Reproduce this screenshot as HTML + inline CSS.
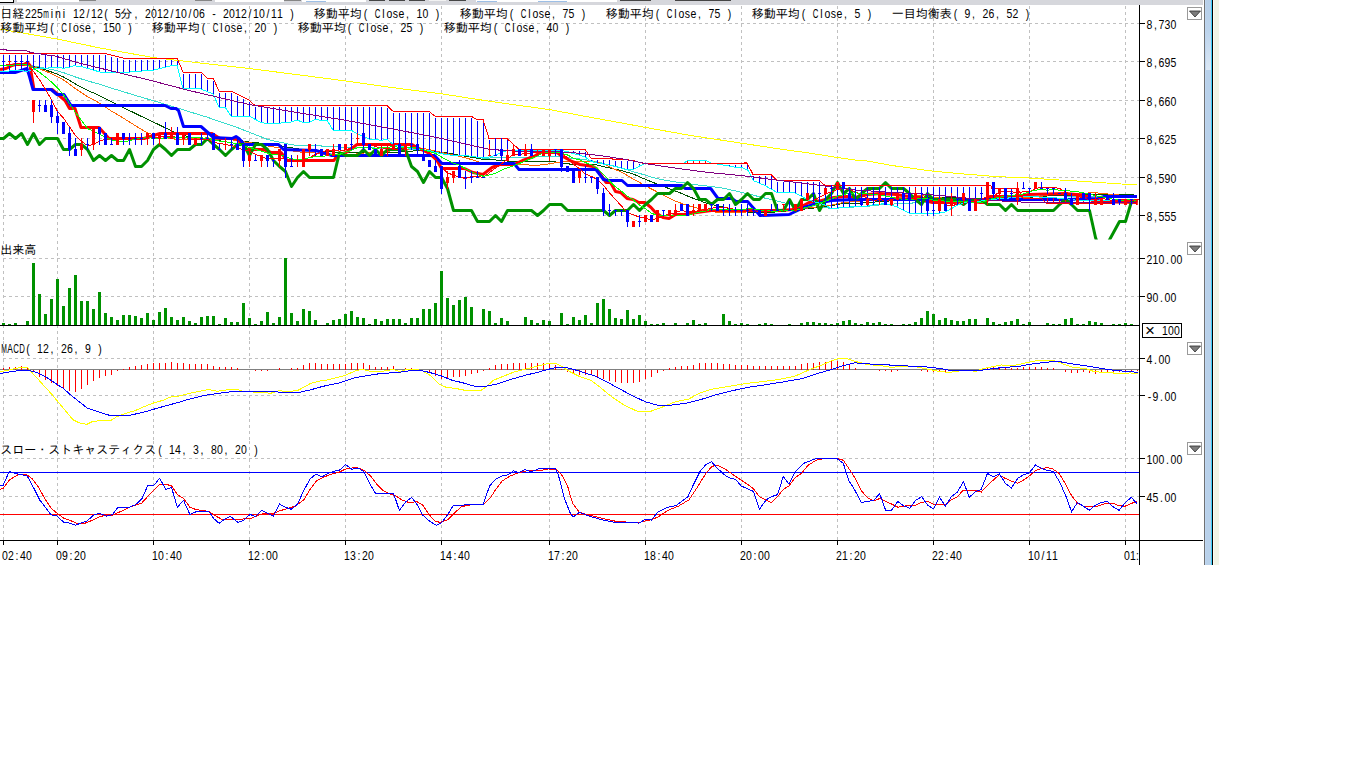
<!DOCTYPE html><html lang="ja"><head><meta charset="utf-8"><title>日経225mini chart</title><style>html,body{margin:0;padding:0;background:#fff;overflow:hidden}svg{display:block}</style></head><body><svg width="1366" height="768" viewBox="0 0 1366 768" font-family="Liberation Mono, IPAGothic, monospace" shape-rendering="crispEdges">
<rect width="1366" height="768" fill="#fff"/>
<rect x="0" y="0" width="1203" height="5" fill="#d6d7dc"/>
<rect x="0" y="0" width="13" height="2" fill="#fff"/>
<rect x="0" y="2" width="14" height="1" fill="#000"/>
<rect x="13" y="0" width="1" height="3" fill="#000"/>
<rect x="17" y="0" width="62" height="2" fill="#fff"/>
<rect x="79" y="0" width="17" height="1" fill="#858585"/>
<rect x="195" y="0" width="17" height="1" fill="#858585"/>
<rect x="215" y="0" width="69" height="2" fill="#fff"/>
<rect x="284" y="0" width="17" height="1" fill="#858585"/>
<rect x="302" y="0" width="64" height="2" fill="#fff"/>
<rect x="306" y="1" width="20" height="1" fill="#9dbfe6"/>
<rect x="369" y="0" width="16" height="1" fill="#454545"/>
<rect x="389" y="0" width="16" height="1" fill="#454545"/>
<rect x="409" y="0" width="16" height="1" fill="#454545"/>
<rect x="429" y="0" width="17" height="1" fill="#f2f2f2"/>
<rect x="449" y="0" width="17" height="1" fill="#454545"/>
<rect x="476" y="0" width="141" height="2" fill="#fff"/>
<rect x="477" y="1" width="20" height="1" fill="#9dbfe6"/>
<rect x="538" y="1" width="29" height="1" fill="#9dbfe6"/>
<rect x="620" y="0" width="31" height="1" fill="#454545"/>
<rect x="675" y="0" width="56" height="1" fill="#454545"/>
<defs><linearGradient id="fr" x1="0" y1="0" x2="0" y2="1"><stop offset="0" stop-color="#b7cfe9"/><stop offset="0.45" stop-color="#bdd4ec"/><stop offset="1" stop-color="#dbe7f4"/></linearGradient></defs>
<rect x="1204" y="0" width="1" height="565" fill="#707172"/>
<rect x="1205" y="0" width="6" height="565" fill="#b9d1ea"/>
<rect x="1205" y="0" width="6" height="70" fill="url(#fr)"/>
<rect x="1205" y="0" width="1" height="565" fill="#bfd7f1"/>
<rect x="1211" y="0" width="1" height="565" fill="#3fcffb"/>
<rect x="1212" y="0" width="1" height="565" fill="#000"/>
<rect x="1213" y="0" width="6" height="565" fill="#f0f4e6"/>
<rect x="1213" y="0" width="1" height="565" fill="#fbfdf2"/>
<path d="M3.5 6V240 M3.5 241V340 M3.5 341V440 M3.5 441V540 M57.5 6V240 M57.5 241V340 M57.5 341V440 M57.5 441V540 M153.5 6V240 M153.5 241V340 M153.5 341V440 M153.5 441V540 M249.5 6V240 M249.5 241V340 M249.5 341V440 M249.5 441V540 M345.5 6V240 M345.5 241V340 M345.5 341V440 M345.5 441V540 M441.5 6V240 M441.5 241V340 M441.5 341V440 M441.5 441V540 M549.5 6V240 M549.5 241V340 M549.5 341V440 M549.5 441V540 M645.5 6V240 M645.5 241V340 M645.5 341V440 M645.5 441V540 M741.5 6V240 M741.5 241V340 M741.5 341V440 M741.5 441V540 M837.5 6V240 M837.5 241V340 M837.5 341V440 M837.5 441V540 M933.5 6V240 M933.5 241V340 M933.5 341V440 M933.5 441V540 M1029.5 6V240 M1029.5 241V340 M1029.5 341V440 M1029.5 441V540 M1125.5 6V240 M1125.5 241V340 M1125.5 341V440 M1125.5 441V540 M3 23.5H1139 M3 61.5H1139 M3 100.5H1139 M3 138.5H1139 M3 177.5H1139 M3 215.5H1139 M3 258.5H1139 M3 296.5H1139 M3 358.5H1139 M3 395.5H1139 M3 458.5H1139 M3 496.5H1139" stroke="#c0c0c0" stroke-width="1" stroke-dasharray="3 3" fill="none"/>
<g clip-path="url(#cp)"><clipPath id="cp"><rect x="0" y="5" width="1137.5" height="234.5"/></clipPath>
<polyline points="0,65.27 3.5,65.27 9.5,65.24 15.5,65.22 21.5,65.19 27.5,65.16 33.5,66.04 39.5,67.06 45.5,68.21 51.5,69.51 57.5,70.94 63.5,72.64 69.5,74.76 75.5,77.01 81.5,78.99 87.5,80.97 93.5,82.54 99.5,84.25 105.5,86.23 111.5,88.21 117.5,89.91 123.5,91.76 129.5,93.6 135.5,95.44 141.5,97.28 147.5,98.99 153.5,100.83 159.5,102.53 165.5,104.38 171.5,106.08 177.5,108.06 183.5,109.77 189.5,111.75 195.5,113.59 201.5,115.43 207.5,117.28 213.5,119.39 219.5,121.51 225.5,123.49 231.5,125.47 237.5,127.59 243.5,130.01 249.5,132.29 255.5,134.71 261.5,136.99 267.5,139.41 273.5,140.93 279.5,142.03 285.5,143.4 291.5,144.64 297.5,145.6 303.5,146.01 309.5,145.88 315.5,145.74 321.5,146.01 327.5,146.15 333.5,146.7 339.5,147.11 345.5,147.11 351.5,147.11 357.5,147.25 363.5,147.39 369.5,147.66 375.5,148.07 381.5,148.35 387.5,148.62 393.5,148.76 399.5,149.31 405.5,149.45 411.5,149.72 417.5,149.86 423.5,150.55 429.5,151.1 435.5,151.93 441.5,153.13 447.5,154.1 453.5,154.65 459.5,155.34 465.5,156.16 471.5,156.99 477.5,157.67 483.5,158.09 489.5,158.02 495.5,157.88 501.5,157.88 507.5,157.74 513.5,157.47 519.5,157.6 525.5,157.19 531.5,156.92 537.5,156.64 543.5,156.64 549.5,156.78 555.5,156.78 561.5,157.05 567.5,157.6 573.5,158.43 579.5,158.98 585.5,159.8 591.5,160.63 597.5,161.87 603.5,163.52 609.5,165.03 615.5,166.4 621.5,167.92 627.5,169.84 633.5,171.77 639.5,173.42 645.5,175.2 651.5,177.13 657.5,178.64 663.5,179.88 669.5,180.98 675.5,181.94 681.5,182.52 687.5,183.48 693.5,184.44 699.5,185.13 705.5,185.82 711.5,186.51 717.5,187.33 723.5,188.16 729.5,189.6 735.5,190.97 741.5,192.35 747.5,193.72 753.5,195.24 759.5,196.75 765.5,198.26 771.5,199.64 777.5,201.15 783.5,202.53 789.5,204.04 795.5,205.41 801.5,206.24 807.5,206.79 813.5,207.06 819.5,207.61 825.5,207.89 831.5,208.16 837.5,208.03 843.5,207.47 849.5,207.2 855.5,206.93 861.5,206.79 867.5,206.24 873.5,205.69 879.5,205 885.5,204.72 891.5,204.18 897.5,203.76 903.5,203.49 909.5,203.21 915.5,202.8 921.5,202.39 927.5,202.25 933.5,202.25 939.5,202.11 945.5,202.25 951.5,202.11 957.5,201.84 963.5,201.43 969.5,201.43 975.5,201.15 981.5,200.74 987.5,200.05 993.5,199.64 999.5,198.95 1005.5,198.68 1011.5,198.26 1017.5,197.71 1023.5,197.3 1029.5,196.75 1035.5,196.2 1041.5,195.93 1047.5,195.79 1053.5,195.65 1059.5,195.65 1065.5,195.93 1071.5,196.34 1077.5,196.61 1083.5,196.89 1089.5,196.89 1095.5,196.89 1101.5,196.75 1107.5,196.75 1113.5,196.89 1119.5,197.03 1125.5,196.89 1131.5,196.89 1137.5,197.16" fill="none" stroke="#38dccc" stroke-width="1" shape-rendering="crispEdges"/>
<polyline points="0,65.26 3.5,65.26 9.5,65.21 15.5,65.17 21.5,65.12 27.5,65.08 33.5,66.49 39.5,68.12 45.5,69.96 51.5,72.03 57.5,74.32 63.5,77.05 69.5,80.44 75.5,84.04 81.5,87.21 87.5,90.38 93.5,92.89 99.5,95.62 105.5,98.78 111.5,101.95 117.5,104.68 123.5,107.63 129.5,110.58 135.5,113.52 141.5,116.47 147.5,119.2 153.5,122.19 159.5,124.96 165.5,127.96 171.5,130.73 177.5,133.94 183.5,135.26 189.5,136.8 195.5,137.9 201.5,138.78 207.5,139.44 213.5,140.1 219.5,140.1 225.5,139.66 231.5,139.66 237.5,139.88 243.5,141.2 249.5,142.08 255.5,142.74 261.5,143.18 267.5,144.28 273.5,145.16 279.5,145.6 285.5,146.7 291.5,147.8 297.5,148.9 303.5,149.34 309.5,149.78 315.5,150.22 321.5,151.1 327.5,151.32 333.5,151.98 339.5,152.2 345.5,152.42 351.5,152.64 357.5,152.64 363.5,152.42 369.5,152.42 375.5,152.86 381.5,153.08 387.5,152.86 393.5,152.2 399.5,152.2 405.5,151.54 411.5,151.1 417.5,150.66 423.5,150.66 429.5,151.32 435.5,151.54 441.5,152.38 447.5,153.04 453.5,153.92 459.5,155.24 465.5,156.34 471.5,157.22 477.5,158.32 483.5,159.42 489.5,159.53 495.5,159.97 501.5,160.41 507.5,161.07 513.5,161.29 519.5,161.51 525.5,161.29 531.5,161.51 537.5,161.73 543.5,161.95 549.5,161.73 555.5,161.95 561.5,162.83 567.5,163.71 573.5,164.59 579.5,164.81 585.5,165.03 591.5,164.63 597.5,165.07 603.5,166.61 609.5,167.93 615.5,169.25 621.5,170.57 627.5,172.33 633.5,174.09 639.5,176.84 645.5,179.26 651.5,181.9 657.5,184.1 663.5,186.52 669.5,188.72 675.5,191.14 681.5,193.34 687.5,195.98 693.5,198.4 699.5,200.6 705.5,202.8 711.5,204.34 717.5,205.88 723.5,206.98 729.5,208.52 735.5,209.84 741.5,211.16 747.5,212.04 753.5,212.04 759.5,212.26 765.5,212.26 771.5,212.26 777.5,211.82 783.5,211.16 789.5,210.72 795.5,210.28 801.5,209.4 807.5,208.74 813.5,208.08 819.5,207.42 825.5,206.54 831.5,205.66 837.5,204.34 843.5,203.46 849.5,203.24 855.5,203.02 861.5,203.02 867.5,202.58 873.5,202.14 879.5,201.48 885.5,201.26 891.5,200.82 897.5,200.16 903.5,199.72 909.5,199.06 915.5,198.4 921.5,197.74 927.5,197.74 933.5,197.96 939.5,197.52 945.5,197.74 951.5,197.74 957.5,197.96 963.5,197.96 969.5,198.62 975.5,199.06 981.5,199.28 987.5,199.28 993.5,199.5 999.5,199.06 1005.5,199.06 1011.5,198.62 1017.5,198.18 1023.5,197.74 1029.5,197.52 1035.5,196.64 1041.5,196.2 1047.5,195.98 1053.5,195.54 1059.5,195.32 1065.5,195.54 1071.5,195.98 1077.5,195.32 1083.5,194.88 1089.5,194.88 1095.5,194.44 1101.5,194.44 1107.5,194.44 1113.5,194.88 1119.5,194.44 1125.5,194.44 1131.5,194.66 1137.5,195.54" fill="none" stroke="#005000" stroke-width="1" shape-rendering="crispEdges"/>
<polyline points="0,65.24 3.5,65.24 9.5,65.19 15.5,65.13 21.5,65.08 27.5,65.02 33.5,66.78 39.5,68.82 45.5,71.13 51.5,73.72 57.5,76.57 63.5,79.98 69.5,84.22 75.5,88.73 81.5,92.69 87.5,96.65 93.5,99.78 99.5,103.19 105.5,107.16 111.5,111.12 117.5,114.53 123.5,118.27 129.5,122.01 135.5,125.75 141.5,129.49 147.5,132.95 153.5,134.88 159.5,136.25 165.5,137.62 171.5,138.45 177.5,139.55 183.5,139.55 189.5,139.28 195.5,138.45 201.5,138.18 207.5,137.9 213.5,139 219.5,139.82 225.5,139.82 231.5,139.82 237.5,140.65 243.5,141.75 249.5,142.57 255.5,143.68 261.5,144.5 267.5,145.88 273.5,146.97 279.5,147.8 285.5,149.18 291.5,150.82 297.5,151.65 303.5,152.47 309.5,152.47 315.5,153.03 321.5,153.85 327.5,154.4 333.5,154.4 339.5,154.4 345.5,154.4 351.5,154.4 357.5,153.85 363.5,153.03 369.5,152.75 375.5,152.47 381.5,152.2 387.5,151.38 393.5,150.55 399.5,150.82 405.5,149.72 411.5,148.62 417.5,148.07 423.5,148.62 429.5,149.72 435.5,150.82 441.5,152.42 447.5,153.8 453.5,154.9 459.5,156.27 465.5,157.92 471.5,159.57 477.5,161.5 483.5,163.15 489.5,163.28 495.5,163.28 501.5,163.56 507.5,164.11 513.5,164.38 519.5,164.38 525.5,164.66 531.5,165.21 537.5,165.21 543.5,164.66 549.5,163.83 555.5,162.73 561.5,161.69 567.5,161.41 573.5,161.96 579.5,161.69 585.5,161.69 591.5,161.69 597.5,162.24 603.5,163.89 609.5,166.78 615.5,169.53 621.5,172.28 627.5,175.57 633.5,179.15 639.5,182.45 645.5,185.75 651.5,189.05 657.5,192.07 663.5,195.1 669.5,198.12 675.5,201.15 681.5,203.35 687.5,205.55 693.5,206.93 699.5,208.57 705.5,209.95 711.5,211.32 717.5,212.43 723.5,212.43 729.5,212.43 735.5,212.43 741.5,212.43 747.5,211.88 753.5,211.32 759.5,211.05 765.5,210.78 771.5,210.22 777.5,210.22 783.5,209.95 789.5,209.95 795.5,209.68 801.5,209.12 807.5,208.03 813.5,207.2 819.5,206.65 825.5,205.82 831.5,205 837.5,203.62 843.5,202.53 849.5,201.97 855.5,201.43 861.5,201.15 867.5,200.6 873.5,200.05 879.5,198.95 885.5,198.68 891.5,198.12 897.5,197.3 903.5,197.03 909.5,196.47 915.5,195.93 921.5,195.65 927.5,196.47 933.5,197.3 939.5,197.57 945.5,198.68 951.5,199.22 957.5,200.05 963.5,200.32 969.5,200.88 975.5,200.88 981.5,200.32 987.5,199.5 993.5,199.22 999.5,198.95 1005.5,198.68 1011.5,198.4 1017.5,198.12 1023.5,197.57 1029.5,197.03 1035.5,196.47 1041.5,196.2 1047.5,195.1 1053.5,194 1059.5,193.72 1065.5,193.18 1071.5,193.45 1077.5,193.18 1083.5,193.45 1089.5,192.9 1095.5,192.9 1101.5,193.18 1107.5,194 1113.5,194.55 1119.5,195.1 1125.5,195.1 1131.5,195.38 1137.5,196.2" fill="none" stroke="#ff6400" stroke-width="1" shape-rendering="crispEdges"/>
<polyline points="0,29 57,39 100,48 153,57.5 200,63 249,68.5 300,75 342,80.5 383,86.3 409,89.8 441,93.7 478,99.5 514.5,104.8 549,109.5 594,118 620,122.7 646,127.5 690,135.4 786.5,150 809,153 837.5,157.5 855,160 865,160.6 892.5,165.6 933.5,171.25 961,173.75 992.5,176.25 1011,177.25 1029,178 1055,179.75 1077,181 1099,182.5 1121,184 1137,184.4" fill="none" stroke="#ffff00" stroke-width="1" shape-rendering="crispEdges"/>
<polyline points="0,69.5 6,68.5 12,65.5 15,64.5 23.5,64.5 27.5,62.5 30,65.5 34,89.5 52,89.5 58,94.5 65,100.5 69.5,108.5 75,108.5 81,127.5 99,127.5 109,138.5 144,138.5 160,133.5 212,133.5 220,138.5 236,138.5 243,144.5 247,149.5 263.5,149.5 271,152.5 281,152.5 287,160.5 334,160.5 337,155.5 346,152.5 351.5,148.5 357,144.5 412,144.5 417,147.5 429.5,153.5 437,160.5 441,167.5 442,168.5 464.5,168.5 473,172.5 483,174.5 492,167.5 499.5,164.5 514,164.5 522.5,160.5 534,156.5 540,152.5 543.5,152.5 557,152.5 561,155.5 566.5,158.5 572,161.5 580,164.5 593,166.5 596.5,168.5 601.5,175.5 606,182.5 610.5,182.5 615.5,191.5 620.5,192.5 627,198.5 633,199.5 639,202.5 645,202.5 651,207.5 655.5,212.5 663,217.5 669,218.5 675.5,214.5 684,214.5 696.5,212.5 711.5,210.5 744,210.5 779,210.5 794,209.5 801.5,206.5 809,202.5 821.5,200.5 834,197.5 846.5,196.5 855,197.5 867.5,194.5 880,193.5 896,194.5 915,197.5 925,200.5 932.5,202.5 955,202.5 967.5,200.5 980,202.5 986,202.5 990,196.5 1017,196.5 1029,194.5 1065,193.5 1076,194.5 1088,196.5 1093,201.5 1137,202.5" fill="none" stroke="#ff0000" stroke-width="3" shape-rendering="geometricPrecision" stroke-linejoin="round"/>
<polyline points="0,72.5 15,72.5 21,70.5 27,68.5 29.5,76.5 33,89.5 51,89.5 57,94.5 64,94.5 71,105.5 165,105.5 171,108.5 176,108.5 178.5,110.5 183.5,126.5 201,126.5 213.5,137.5 232,138.5 236,136.5 239,138.5 243.5,143.5 244,144.5 278.5,144.5 283.5,149.5 316,150.5 332,155.5 434.5,155.5 442,163.5 514,163.5 519,169.5 596,169.5 603.5,179.5 609,180.5 622,180.5 627.5,185.5 682,185.5 685,188.5 710.7,188.5 718,198.5 732,198.5 736,201.5 747.6,201.5 760,215.5 789,214.5 804,207.5 816.5,203.5 831.5,200.5 855,199.5 1026,199.5 1066,199.5 1098,198.5 1104,196.5 1137,196.5" fill="none" stroke="#0000ff" stroke-width="3" shape-rendering="geometricPrecision" stroke-linejoin="round"/>
<polyline points="0,138.5 3.5,138.5 9.5,133.5 15.5,138.5 21.5,133.5 27.5,144.5 33.5,133.5 39.5,144.5 45.5,138.5 51.5,138.5 57.5,138.5 63.5,149.5 69.5,149.5 75.5,144.5 81.5,144.5 87.5,149.5 93.5,160.5 99.5,155.5 105.5,160.5 111.5,155.5 117.5,160.5 123.5,160.5 129.5,149.5 135.5,166.5 141.5,166.5 147.5,160.5 153.5,149.5 159.5,144.5 165.5,149.5 171.5,155.5 177.5,149.5 183.5,149.5 189.5,149.5 195.5,144.5 201.5,144.5 207.5,138.5 213.5,144.5 219.5,149.5 225.5,155.5 231.5,149.5 237.5,144.5 243.5,144.5 249.5,155.5 255.5,144.5 261.5,144.5 267.5,149.5 273.5,160.5 279.5,166.5 285.5,171.5 291.5,186.5 297.5,177.5 303.5,171.5 309.5,177.5 315.5,177.5 321.5,177.5 327.5,177.5 333.5,177.5 339.5,152.5 345.5,155.5 351.5,155.5 357.5,155.5 363.5,149.5 369.5,155.5 375.5,149.5 381.5,155.5 387.5,149.5 393.5,149.5 399.5,149.5 405.5,149.5 411.5,166.5 417.5,171.5 423.5,182.5 429.5,171.5 435.5,177.5 441.5,177.5 447.5,188.5 453.5,210.5 459.5,210.5 465.5,210.5 471.5,210.5 477.5,221.5 483.5,221.5 489.5,221.5 495.5,215.5 501.5,221.5 507.5,210.5 513.5,210.5 519.5,210.5 525.5,210.5 531.5,210.5 537.5,215.5 543.5,210.5 549.5,204.5 555.5,204.5 561.5,204.5 567.5,210.5 573.5,210.5 579.5,210.5 585.5,210.5 591.5,210.5 597.5,210.5 603.5,210.5 609.5,215.5 615.5,210.5 621.5,210.5 627.5,210.5 633.5,204.5 639.5,210.5 645.5,204.5 651.5,199.5 657.5,193.5 663.5,193.5 669.5,193.5 675.5,188.5 681.5,188.5 687.5,182.5 693.5,188.5 699.5,199.5 705.5,199.5 711.5,204.5 717.5,199.5 723.5,199.5 729.5,193.5 735.5,204.5 741.5,199.5 747.5,193.5 753.5,199.5 759.5,199.5 765.5,193.5 771.5,193.5 777.5,210.5 783.5,210.5 789.5,199.5 795.5,210.5 801.5,199.5 807.5,199.5 813.5,193.5 819.5,210.5 825.5,199.5 831.5,193.5 837.5,182.5 843.5,193.5 849.5,188.5 855.5,199.5 861.5,193.5 867.5,188.5 873.5,188.5 879.5,188.5 885.5,182.5 891.5,188.5 897.5,188.5 903.5,188.5 909.5,193.5 915.5,199.5 921.5,204.5 927.5,193.5 933.5,199.5 939.5,199.5 945.5,199.5 951.5,199.5 957.5,199.5 963.5,204.5 969.5,199.5 975.5,199.5 981.5,199.5 987.5,204.5 993.5,204.5 999.5,204.5 1005.5,210.5 1011.5,204.5 1017.5,210.5 1023.5,210.5 1029.5,210.5 1035.5,210.5 1041.5,210.5 1047.5,210.5 1053.5,210.5 1059.5,204.5 1065.5,199.5 1071.5,204.5 1077.5,210.5 1083.5,210.5 1089.5,210.5 1095.5,237.5 1101.5,254.5 1107.5,243.5 1113.5,232.5 1119.5,221.5 1125.5,221.5 1131.5,201.5 1137.5,201.5" fill="none" stroke="#009100" stroke-width="3" shape-rendering="geometricPrecision" stroke-linejoin="round"/>
<path d="M3.5 55V71.6111 M9.5 55V70.9167 M15.5 55V70.0417 M21.5 55V70.5833 M27.5 55V71.3083 M33.5 55V69.05 M39.5 55V68.3 M45.5 55V68.3 M51.5 55V67.4 M57.5 55V67.4 M63.5 55V68.225 M69.5 55V67.2182 M75.5 55V65.74 M81.5 55V66.6447 M87.5 55V68.3816 M93.5 55V70.1184 M99.5 55V71.8553 M105.5 55.125V72 M111.5 56.625V72 M117.5 58.125V72 M123.5 59.5V72 M129.5 59.5V72 M135.5 59.5V71.5417 M141.5 59.5V71.0417 M147.5 59.5V70.5417 M153.5 59.5V70.0417 M159.5 59.5V68.625 M165.5 59.5V67.125 M171.5 59.5V65.7857 M177.5 60.6667V66.9792 M183.5 73.5V88.7569 M189.5 73.5V88.8403 M195.5 73.5V88.9236 M201.5 74V89.2083 M207.5 79.5V91.7083 M213.5 80.5833V95.0833 M219.5 92.5V107 M225.5 92.5V107.75 M231.5 92.75V116 M237.5 95.75V116 M243.5 98.75V116 M249.5 101.967V116.271 M255.5 107.1V119.521 M261.5 107.1V122.583 M267.5 107.1V123.5 M273.5 107.1V123.5 M279.5 107.1V123.375 M285.5 107.1V122 M291.5 107.1V121.833 M297.5 107.1V120.208 M303.5 107.1V122.5 M309.5 107.1V122.242 M315.5 107.1V119.483 M321.5 107.1V120.4 M327.5 107.1V121.2 M333.5 107.1V130 M339.5 107.1V130 M345.5 107.1V130 M351.5 107.1V130.312 M357.5 107.1V133.969 M363.5 107.1V136.594 M369.5 107.1V139 M375.5 107.1V139.133 M381.5 107.1V140.467 M387.5 107.571V139.458 M393.5 112.75V144.618 M399.5 112.75V146.035 M405.5 112.75V147.451 M411.5 112.75V148.801 M417.5 112.75V149.418 M423.5 112.75V150.035 M429.5 113.167V150.731 M435.5 117.75V152.306 M441.5 117.75V153.823 M447.5 117.75V154.698 M453.5 117.75V155.5 M459.5 117.75V155.5 M465.5 117.75V155.569 M471.5 118.013V156.403 M477.5 120.9V157.236 M483.5 122.492V157.917 M489.5 140V156.875 M495.5 140V155.25 M501.5 140V152.342 M507.5 140.458V150.55 M513.5 145.942V150.005 M567.5 150.8V151.667 M573.5 150.8V153.625 M579.5 150.8V155.167 M585.5 151.542V157.358 M591.5 159.719V161.442 M597.5 159.944V163.083 M603.5 160.169V164.083 M609.5 160.394V165.125 M615.5 160.619V166.625 M621.5 160.844V168.146 M627.5 161.391V169.75 M633.5 162.045V169.458 M639.5 163.919V166.042 M723.5 164.616V165.05 M729.5 164.586V166.164 M735.5 164.557V167.1 M741.5 164.527V167.5 M747.5 165.45V169.9 M753.5 175.9V180.643 M759.5 175.9V183.229 M765.5 175.9V185.887 M771.5 176.388V189.338 M777.5 181.75V192.514 M783.5 181.75V192.681 M789.5 181.75V192.847 M795.5 181.75V193.25 M801.5 181.75V196.292 M807.5 181.75V199.646 M813.5 181.75V201.406 M819.5 182.196V203.281 M825.5 187.107V205.288 M831.5 187.187V208.75 M837.5 187.267V208.176 M843.5 187.347V207.601 M849.5 187.427V207.027 M855.5 187.498V206.49 M861.5 187.48V206.37 M867.5 187.462V206.25 M873.5 187.444V204.474 M879.5 187.425V204.095 M885.5 187.407V203.777 M891.5 187.389V205.315 M897.5 187.37V207 M903.5 187.352V210.25 M909.5 187.334V213 M915.5 187.315V213 M921.5 187.297V213 M927.5 187.279V213 M933.5 187.26V213 M939.5 187.242V213 M945.5 187.224V211.729 M951.5 187.205V208.488 M957.5 187.187V205.383 M963.5 187.169V202.949 M969.5 187.15V202.331 M975.5 187.132V201.713 M981.5 187.114V200.938 M987.5 187.1V199.866 M993.5 189.6V199.329 M999.5 189.6V198.792 M1005.5 189.6V198.258 M1011.5 189.6V197.758 M1017.5 190.425V197.258" stroke="#0000ff" stroke-width="1" fill="none"/>
<path d="M687.5 161.26V163.293 M693.5 161.1V163.264 M699.5 161.1V163.234 M705.5 161.1V163.204 M1047.5 197.895V203.8 M1053.5 198.274V203.8 M1059.5 198.653V203.8 M1065.5 199.074V203.8 M1071.5 199.956V203.8 M1077.5 200.838V203.8 M1083.5 201.484V203.8 M1089.5 201.418V203.8 M1095.5 201.353V203.733 M1101.5 201.288V203 M1107.5 201.042V203 M1113.5 200.542V202.733" stroke="#ff0000" stroke-width="1" fill="none"/>
<polyline points="0,72 9,71 15,70 21,70.5 27,71.5 33,69.2 36,68.3 47,68.3 49,67.4 58.5,67.4 63,68.3 69,67.4 74.5,65.4 77,66.25 81,66.5 100,72 130,72 154,70 170,66 177,65 183,88.75 201,89 213,94 219,107 225,107 231,116 249,116 261,122.5 267,123.5 279,123.5 285,122 291,122 297,120 303,122.5 309,122.5 315,119.4 321,120.4 327,120.4 333,130 351,130 357,133.75 369,139 375,139 381,140.6 387,139 393,144.5 411,148.75 429,150.6 441,153.75 453,155.5 465,155.5 483,158 489,157 495,155.5 501,152.5 507,150.6 513,150 561,150.5 567,151.5 573,153.5 579,155 585,157 591,161.3 597,163 603,164 609,165 615,166.5 621,168 627,169.75 633,169.75 639,166.25 645,163.75 684,163 687.75,160.6 706,160.6 711,163 720,164.4 734,167 741.5,167.5 747.75,170 753.4,180.6 765,185.6 777,192.5 795,193 801,196 807,199.5 813,201.25 825,205 831.5,208.75 855,206.5 867.5,206.25 873.75,204.4 886,203.75 892.5,205.6 897.5,207 903,210 909,213 940,213 945,212 951,208.75 957,205.6 963,203 980,201.25 986,200 1005,198.3 1023,196.8 1030,196.6 1046,197.3 1065,198.5 1082,201 1105,200.75 1117,199.75 1130,200.75 1139,200.75" fill="none" stroke="#00ffff" stroke-width="1" shape-rendering="crispEdges"/>
<polyline points="0,53.5 105,53.5 123,58 177,58 183,72 201,72 207,78 213,78 219,91 231,91 249,100 255,105.6 387,105.6 393,111.25 429,111.25 435,116.25 471,116.25 477,119.4 483,119.4 489,138.5 507,138.5 513,144 519,149.3 585,149.3 591,158.2 623,159.4 634,160.6 640.5,162.75 645.5,163.5 747,163 753,174.4 771,174.4 777,180.25 819,180.25 825,185.6 855,186 986,185.6 990.8,185.6 991.5,188.1 1017,188.1 1023,198 1041,198 1047,203.8 1095,203.8 1101,203 1113,203 1119,199.8 1139,199.8" fill="none" stroke="#ff0000" stroke-width="1" shape-rendering="crispEdges"/>
<polyline points="0,65.08 3.5,65.08 9.5,64.86 15.5,64.64 21.5,64.42 27.5,64.2 33.5,71.46 39.5,79.82 45.5,89.28 51.5,99.84 57.5,111.5 63.5,118.1 69.5,126.9 75.5,135.7 81.5,141.2 87.5,145.6 93.5,144.5 99.5,141.2 105.5,139 111.5,139 117.5,136.8 123.5,139 129.5,140.1 135.5,139 141.5,137.9 147.5,137.9 153.5,137.9 159.5,136.8 165.5,136.8 171.5,135.7 177.5,137.9 183.5,136.8 189.5,139 195.5,139 201.5,140.1 207.5,139 213.5,142.3 219.5,143.4 225.5,144.5 231.5,145.6 237.5,147.8 243.5,150 249.5,151.1 255.5,154.4 261.5,156.6 267.5,158.8 273.5,158.8 279.5,157.7 285.5,158.8 291.5,161 297.5,161 303.5,158.8 309.5,157.7 315.5,154.4 321.5,152.2 327.5,150 333.5,150 339.5,151.1 345.5,150 351.5,147.8 357.5,145.6 363.5,144.5 369.5,144.5 375.5,146.7 381.5,147.8 387.5,148.9 393.5,148.9 399.5,150 405.5,147.8 411.5,146.7 417.5,147.8 423.5,151.1 429.5,153.3 435.5,158.8 441.5,167.38 447.5,172.88 453.5,175.08 459.5,177.28 465.5,178.38 471.5,176.4 477.5,176.4 483.5,177.5 489.5,172.55 495.5,168.15 501.5,163.75 507.5,159.35 513.5,153.85 519.5,154.4 525.5,153.3 531.5,153.3 537.5,152.2 543.5,152.2 549.5,151.1 555.5,151.1 561.5,153.3 567.5,157.7 573.5,164.3 579.5,168.7 585.5,174.2 591.5,176.4 597.5,179.7 603.5,185.2 609.5,192.9 615.5,199.5 621.5,206.1 627.5,212.7 633.5,214.9 639.5,217.1 645.5,218.2 651.5,220.4 657.5,218.2 663.5,216 669.5,213.8 675.5,212.7 681.5,210.5 687.5,211.6 693.5,211.6 699.5,210.5 705.5,209.4 711.5,208.3 717.5,207.2 723.5,207.2 729.5,208.3 735.5,209.4 741.5,210.5 747.5,210.5 753.5,210.5 759.5,211.6 765.5,211.6 771.5,211.6 777.5,211.6 783.5,210.5 789.5,209.4 795.5,208.3 801.5,206.1 807.5,202.8 813.5,200.6 819.5,197.3 825.5,194 831.5,191.8 837.5,189.6 843.5,188.5 849.5,189.6 855.5,191.8 861.5,195.1 867.5,198.4 873.5,200.6 879.5,199.5 885.5,200.6 891.5,199.5 897.5,198.4 903.5,198.4 909.5,199.5 915.5,197.3 921.5,196.2 927.5,199.5 933.5,201.7 939.5,201.7 945.5,205 951.5,206.1 957.5,203.9 963.5,200.6 969.5,202.8 975.5,200.6 981.5,199.5 987.5,196.2 993.5,196.2 999.5,191.8 1005.5,191.8 1011.5,191.8 1017.5,192.9 1023.5,191.8 1029.5,191.8 1035.5,188.5 1041.5,187.4 1047.5,187.4 1053.5,187.4 1059.5,188.5 1065.5,191.8 1071.5,195.1 1077.5,196.2 1083.5,198.4 1089.5,199.5 1095.5,199.5 1101.5,198.4 1107.5,199.5 1113.5,200.6 1119.5,200.6 1125.5,200.6 1131.5,200.6 1137.5,201.7" fill="none" stroke="#ff0000" stroke-width="1" shape-rendering="crispEdges"/>
<polyline points="0,49.6 6.5,49.6 7,50.4 25,50.4 31,52.5 37,53.4 43,54.4 49,55.4 55,56 80,63.3 153,81 187,90 249,104.5 300,113 342,119.7 392,128.75 441.4,138.5 467,144.4 489.5,149.4 513,151 550,151.25 575.5,153 600.5,155.6 625.5,159.4 645,163.5 663,166.25 684,169.3 709,172.5 741.5,175.6 771.5,179.4 796.5,182.5 821.5,185.6 855,190 886,192 917.5,193.75 949,196.25 980,199.4 1005,201.25 1026,202.25 1055,202.4 1137,203" fill="none" stroke="#800080" stroke-width="1" shape-rendering="crispEdges"/>
<polyline points="0,65.19 3.5,65.19 9.5,65.08 15.5,64.97 21.5,64.86 27.5,64.75 33.5,68.27 39.5,72.34 45.5,76.96 51.5,82.13 57.5,87.85 63.5,94.78 69.5,103.36 75.5,112.49 81.5,120.52 87.5,128.55 93.5,131.3 99.5,134.05 105.5,137.35 111.5,140.1 117.5,141.2 123.5,141.75 129.5,140.65 135.5,139 141.5,138.45 147.5,137.35 153.5,138.45 159.5,138.45 165.5,137.9 171.5,136.8 177.5,137.9 183.5,137.35 189.5,137.9 195.5,137.9 201.5,137.9 207.5,138.45 213.5,139.55 219.5,141.2 225.5,141.75 231.5,142.85 237.5,143.4 243.5,146.15 249.5,147.25 255.5,149.45 261.5,151.1 267.5,153.3 273.5,154.4 279.5,154.4 285.5,156.6 291.5,158.8 297.5,159.9 303.5,158.8 309.5,157.7 315.5,156.6 321.5,156.6 327.5,155.5 333.5,154.4 339.5,154.4 345.5,152.2 351.5,150 357.5,147.8 363.5,147.25 369.5,147.8 375.5,148.35 381.5,147.8 387.5,147.25 393.5,146.7 399.5,147.25 405.5,147.25 411.5,147.25 417.5,148.35 423.5,150 429.5,151.65 435.5,153.3 441.5,157.04 447.5,160.34 453.5,163.09 459.5,165.29 465.5,168.59 471.5,171.89 477.5,174.64 483.5,176.29 489.5,174.92 495.5,173.26 501.5,170.07 507.5,167.88 513.5,165.68 519.5,163.47 525.5,160.72 531.5,158.53 537.5,155.78 543.5,153.03 549.5,152.75 555.5,152.2 561.5,153.3 567.5,154.95 573.5,158.25 579.5,159.9 585.5,162.65 591.5,164.85 597.5,168.7 603.5,174.75 609.5,180.8 615.5,186.85 621.5,191.25 627.5,196.2 633.5,200.05 639.5,205 645.5,208.85 651.5,213.25 657.5,215.45 663.5,215.45 669.5,215.45 675.5,215.45 681.5,215.45 687.5,214.9 693.5,213.8 699.5,212.15 705.5,211.05 711.5,209.4 717.5,209.4 723.5,209.4 729.5,209.4 735.5,209.4 741.5,209.4 747.5,208.85 753.5,208.85 759.5,209.95 765.5,210.5 771.5,211.05 777.5,211.05 783.5,210.5 789.5,210.5 795.5,209.95 801.5,208.85 807.5,207.2 813.5,205.55 819.5,203.35 825.5,201.15 831.5,198.95 837.5,196.2 843.5,194.55 849.5,193.45 855.5,192.9 861.5,193.45 867.5,194 873.5,194.55 879.5,194.55 885.5,196.2 891.5,197.3 897.5,198.4 903.5,199.5 909.5,199.5 915.5,198.95 921.5,197.85 927.5,198.95 933.5,200.05 939.5,200.6 945.5,201.15 951.5,201.15 957.5,201.7 963.5,201.15 969.5,202.25 975.5,202.8 981.5,202.8 987.5,200.05 993.5,198.4 999.5,197.3 1005.5,196.2 1011.5,195.65 1017.5,194.55 1023.5,194 1029.5,191.8 1035.5,190.15 1041.5,189.6 1047.5,190.15 1053.5,189.6 1059.5,190.15 1065.5,190.15 1071.5,191.25 1077.5,191.8 1083.5,192.9 1089.5,194 1095.5,195.65 1101.5,196.75 1107.5,197.85 1113.5,199.5 1119.5,200.05 1125.5,200.05 1131.5,199.5 1137.5,200.6" fill="none" stroke="#00ff00" stroke-width="1" shape-rendering="crispEdges"/>
<path d="M9.5 61V65 M33.5 100V123 M81.5 138V156 M93.5 127V150 M117.5 133V145 M147.5 133V145 M159.5 133V145 M171.5 127V139 M183.5 133V145 M195.5 138V145 M225.5 138V150 M249.5 149V167 M261.5 155V167 M279.5 149V167 M297.5 155V167 M303.5 149V167 M309.5 144V156 M327.5 149V156 M333.5 144V156 M345.5 144V150 M357.5 133V145 M381.5 144V156 M387.5 144V156 M393.5 144V150 M405.5 144V156 M447.5 171V189 M453.5 171V183 M489.5 144V156 M507.5 149V161 M513.5 144V156 M525.5 144V156 M537.5 149V156 M543.5 149V156 M549.5 149V161 M579.5 171V183 M633.5 221V227 M645.5 215V222 M657.5 210V222 M669.5 210V216 M675.5 204V216 M693.5 204V216 M699.5 204V211 M705.5 204V211 M765.5 210V216 M783.5 204V211 M795.5 204V211 M801.5 199V211 M807.5 193V200 M825.5 188V194 M837.5 182V189 M867.5 199V205 M879.5 193V205 M891.5 199V206 M897.5 193V200 M915.5 188V200 M939.5 199V211 M951.5 193V216 M963.5 193V205 M975.5 199V211 M987.5 182V205 M999.5 188V200 M1017.5 182V205 M1035.5 182V189 M1077.5 193V205 M1095.5 193V205 M1101.5 199V205 M1125.5 199V205 M1137.5 199V205" stroke="#ff0000" stroke-width="1" fill="none"/>
<path d="M8 61h3v1h-3z M32 100h3v12h-3z M80 144h3v6h-3z M92 127h3v18h-3z M116 133h3v12h-3z M146 133h3v6h-3z M158 133h3v6h-3z M170 133h3v6h-3z M182 133h3v6h-3z M194 138h3v7h-3z M224 144h3v1h-3z M248 155h3v6h-3z M260 155h3v6h-3z M278 149h3v12h-3z M296 160h3v1h-3z M302 149h3v18h-3z M308 144h3v6h-3z M326 149h3v7h-3z M332 149h3v7h-3z M344 144h3v6h-3z M356 138h3v1h-3z M380 149h3v7h-3z M386 144h3v1h-3z M392 144h3v6h-3z M404 144h3v6h-3z M446 177h3v6h-3z M452 171h3v7h-3z M488 155h3v1h-3z M506 155h3v6h-3z M512 149h3v7h-3z M524 149h3v7h-3z M536 149h3v1h-3z M542 149h3v7h-3z M548 149h3v7h-3z M578 171h3v7h-3z M632 221h3v6h-3z M644 215h3v7h-3z M656 210h3v12h-3z M668 210h3v6h-3z M674 210h3v6h-3z M692 210h3v1h-3z M698 204h3v7h-3z M704 204h3v7h-3z M764 210h3v6h-3z M782 204h3v1h-3z M794 204h3v7h-3z M800 199h3v12h-3z M806 193h3v7h-3z M824 188h3v6h-3z M836 182h3v7h-3z M866 199h3v6h-3z M878 193h3v7h-3z M890 199h3v6h-3z M896 193h3v7h-3z M914 193h3v7h-3z M938 199h3v12h-3z M950 199h3v6h-3z M962 193h3v7h-3z M974 199h3v12h-3z M986 182h3v18h-3z M998 188h3v6h-3z M1016 188h3v12h-3z M1034 182h3v7h-3z M1076 193h3v12h-3z M1094 199h3v6h-3z M1100 199h3v6h-3z M1124 199h3v6h-3z M1136 199h3v6h-3z" fill="#ff0000"/>
<path d="M3.5 61V68 M15.5 61V68 M21.5 61V68 M27.5 61V68 M39.5 100V112 M45.5 100V112 M51.5 100V123 M57.5 111V134 M63.5 122V134 M69.5 127V156 M75.5 138V156 M87.5 138V150 M99.5 127V145 M105.5 133V145 M111.5 138V145 M123.5 133V145 M129.5 133V145 M135.5 133V145 M141.5 133V145 M153.5 133V145 M165.5 122V139 M177.5 127V145 M189.5 133V145 M201.5 133V145 M207.5 133V139 M213.5 133V150 M219.5 144V150 M231.5 138V150 M237.5 138V150 M243.5 144V167 M255.5 155V161 M267.5 155V167 M273.5 160V167 M285.5 144V178 M291.5 155V167 M315.5 144V156 M321.5 149V156 M339.5 144V150 M351.5 133V150 M363.5 133V150 M369.5 144V150 M375.5 149V156 M399.5 144V156 M411.5 144V150 M417.5 144V156 M423.5 149V161 M429.5 160V167 M435.5 160V172 M441.5 166V194 M459.5 160V178 M465.5 171V189 M471.5 171V183 M477.5 171V178 M495.5 138V156 M501.5 138V161 M519.5 149V156 M531.5 144V156 M555.5 149V156 M561.5 149V172 M567.5 166V172 M573.5 171V183 M585.5 166V183 M591.5 177V183 M597.5 177V194 M603.5 188V216 M609.5 204V216 M615.5 210V216 M621.5 210V216 M627.5 210V227 M639.5 215V227 M651.5 215V222 M663.5 210V216 M681.5 204V211 M687.5 204V216 M711.5 204V211 M717.5 204V211 M723.5 204V216 M729.5 204V216 M735.5 207V216 M741.5 204V216 M747.5 204V216 M753.5 208V216 M759.5 210V216 M771.5 204V211 M777.5 204V211 M789.5 201V211 M813.5 191V202 M819.5 182V202 M831.5 185V202 M843.5 182V200 M849.5 188V200 M855.5 188V205 M861.5 188V205 M873.5 188V205 M885.5 199V205 M903.5 193V200 M909.5 193V213 M921.5 193V200 M927.5 199V216 M933.5 204V216 M945.5 199V211 M957.5 199V205 M969.5 199V211 M981.5 193V200 M993.5 182V197 M1005.5 188V200 M1011.5 189V200 M1023.5 182V189 M1029.5 188V194 M1041.5 182V189 M1047.5 188V194 M1053.5 188V194 M1065.5 188V200 M1071.5 193V205 M1083.5 193V200 M1089.5 193V211 M1107.5 195V200 M1113.5 193V205 M1119.5 199V205 M1131.5 199V205" stroke="#0000ff" stroke-width="1" fill="none"/>
<path d="M2 61h3v1h-3z M14 61h3v1h-3z M20 61h3v1h-3z M26 61h3v1h-3z M38 105h3v1h-3z M44 105h3v7h-3z M50 105h3v12h-3z M56 116h3v7h-3z M62 122h3v12h-3z M68 133h3v17h-3z M74 149h3v7h-3z M86 144h3v1h-3z M98 127h3v7h-3z M104 133h3v12h-3z M110 144h3v1h-3z M122 133h3v6h-3z M128 138h3v1h-3z M134 138h3v1h-3z M140 138h3v1h-3z M152 133h3v6h-3z M164 133h3v6h-3z M176 133h3v12h-3z M188 133h3v12h-3z M200 138h3v1h-3z M206 138h3v1h-3z M212 133h3v17h-3z M218 149h3v1h-3z M230 144h3v1h-3z M236 144h3v6h-3z M242 144h3v17h-3z M254 160h3v1h-3z M266 155h3v6h-3z M272 160h3v1h-3z M284 144h3v23h-3z M290 166h3v1h-3z M314 149h3v1h-3z M320 149h3v7h-3z M338 144h3v6h-3z M350 144h3v1h-3z M362 133h3v12h-3z M368 144h3v6h-3z M374 149h3v7h-3z M398 144h3v12h-3z M410 144h3v1h-3z M416 144h3v6h-3z M422 155h3v6h-3z M428 160h3v7h-3z M434 166h3v6h-3z M440 166h3v23h-3z M458 166h3v12h-3z M464 177h3v1h-3z M470 177h3v1h-3z M476 177h3v1h-3z M482 177h3v1h-3z M494 155h3v1h-3z M500 149h3v7h-3z M518 149h3v7h-3z M530 149h3v7h-3z M554 149h3v1h-3z M560 149h3v18h-3z M566 166h3v6h-3z M572 171h3v12h-3z M584 177h3v1h-3z M590 177h3v1h-3z M596 177h3v12h-3z M602 193h3v18h-3z M608 210h3v1h-3z M614 210h3v1h-3z M620 210h3v1h-3z M626 210h3v12h-3z M638 221h3v1h-3z M650 215h3v7h-3z M662 210h3v1h-3z M680 204h3v7h-3z M686 204h3v12h-3z M710 204h3v1h-3z M716 204h3v7h-3z M722 210h3v1h-3z M728 210h3v1h-3z M734 210h3v1h-3z M740 210h3v1h-3z M746 210h3v1h-3z M752 210h3v1h-3z M758 210h3v6h-3z M770 210h3v1h-3z M776 210h3v1h-3z M788 210h3v1h-3z M812 193h3v1h-3z M818 193h3v1h-3z M830 188h3v1h-3z M842 182h3v7h-3z M848 193h3v7h-3z M854 199h3v1h-3z M860 199h3v6h-3z M872 199h3v1h-3z M884 199h3v6h-3z M902 193h3v7h-3z M908 193h3v7h-3z M920 193h3v1h-3z M926 199h3v12h-3z M932 210h3v1h-3z M944 204h3v7h-3z M956 199h3v1h-3z M968 199h3v12h-3z M980 193h3v1h-3z M992 182h3v12h-3z M1004 188h3v12h-3z M1010 193h3v1h-3z M1022 188h3v1h-3z M1028 188h3v1h-3z M1040 188h3v1h-3z M1046 188h3v1h-3z M1052 188h3v1h-3z M1058 193h3v1h-3z M1064 193h3v7h-3z M1070 199h3v6h-3z M1082 193h3v7h-3z M1088 193h3v7h-3z M1106 197h3v3h-3z M1112 199h3v6h-3z M1118 199h3v3h-3z M1130 199h3v1h-3z" fill="#0000ff"/>
</g>
<rect x="1137" y="199" width="2" height="1" fill="#ff0000"/>
<path d="M2 323h3v2h-3z M8 324h3v1h-3z M14 323h3v2h-3z M26 321h3v4h-3z M32 263h3v62h-3z M38 294h3v31h-3z M44 314h3v11h-3z M50 299h3v26h-3z M56 279h3v46h-3z M62 306h3v19h-3z M68 288h3v37h-3z M74 275h3v50h-3z M80 301h3v24h-3z M86 301h3v24h-3z M92 309h3v16h-3z M98 292h3v33h-3z M104 313h3v12h-3z M110 317h3v8h-3z M116 320h3v5h-3z M122 315h3v10h-3z M128 315h3v10h-3z M134 316h3v9h-3z M140 318h3v7h-3z M146 313h3v12h-3z M152 320h3v5h-3z M158 312h3v13h-3z M164 308h3v17h-3z M170 317h3v8h-3z M176 320h3v5h-3z M182 317h3v8h-3z M188 321h3v4h-3z M194 323h3v2h-3z M200 317h3v8h-3z M206 316h3v9h-3z M212 316h3v9h-3z M218 324h3v1h-3z M224 318h3v7h-3z M230 322h3v3h-3z M236 322h3v3h-3z M242 303h3v22h-3z M248 318h3v7h-3z M254 324h3v1h-3z M260 321h3v4h-3z M266 312h3v13h-3z M272 323h3v2h-3z M278 317h3v8h-3z M284 258h3v67h-3z M290 313h3v12h-3z M296 321h3v4h-3z M302 309h3v16h-3z M308 311h3v14h-3z M314 320h3v5h-3z M326 323h3v2h-3z M332 320h3v5h-3z M338 319h3v6h-3z M344 314h3v11h-3z M350 311h3v14h-3z M356 317h3v8h-3z M362 318h3v7h-3z M368 324h3v1h-3z M374 319h3v6h-3z M380 321h3v4h-3z M386 319h3v6h-3z M392 319h3v6h-3z M398 319h3v6h-3z M404 323h3v2h-3z M410 318h3v7h-3z M416 318h3v7h-3z M422 309h3v16h-3z M428 309h3v16h-3z M434 303h3v22h-3z M440 271h3v54h-3z M446 298h3v27h-3z M452 305h3v20h-3z M458 300h3v25h-3z M464 297h3v28h-3z M470 307h3v18h-3z M482 309h3v16h-3z M488 311h3v14h-3z M494 323h3v2h-3z M500 318h3v7h-3z M506 321h3v4h-3z M524 317h3v8h-3z M530 320h3v5h-3z M536 323h3v2h-3z M542 320h3v5h-3z M548 321h3v4h-3z M560 313h3v12h-3z M566 324h3v1h-3z M572 317h3v8h-3z M578 320h3v5h-3z M584 315h3v10h-3z M590 323h3v2h-3z M596 303h3v22h-3z M602 299h3v26h-3z M608 309h3v16h-3z M614 318h3v7h-3z M620 319h3v6h-3z M626 310h3v15h-3z M632 319h3v6h-3z M638 315h3v10h-3z M644 321h3v4h-3z M650 324h3v1h-3z M656 324h3v1h-3z M662 323h3v2h-3z M674 323h3v2h-3z M686 323h3v2h-3z M692 320h3v5h-3z M698 324h3v1h-3z M704 323h3v2h-3z M722 314h3v11h-3z M728 321h3v4h-3z M734 324h3v1h-3z M740 323h3v2h-3z M746 324h3v1h-3z M758 324h3v1h-3z M764 323h3v2h-3z M770 324h3v1h-3z M788 324h3v1h-3z M800 323h3v2h-3z M806 322h3v3h-3z M812 322h3v3h-3z M818 323h3v2h-3z M824 323h3v2h-3z M830 324h3v1h-3z M836 323h3v2h-3z M842 321h3v4h-3z M848 320h3v5h-3z M854 323h3v2h-3z M860 324h3v1h-3z M866 322h3v3h-3z M872 323h3v2h-3z M878 322h3v3h-3z M884 324h3v1h-3z M890 324h3v1h-3z M902 324h3v1h-3z M908 324h3v1h-3z M914 322h3v3h-3z M920 318h3v7h-3z M926 311h3v14h-3z M932 314h3v11h-3z M938 320h3v5h-3z M944 318h3v7h-3z M950 320h3v5h-3z M956 321h3v4h-3z M962 321h3v4h-3z M968 319h3v6h-3z M974 319h3v6h-3z M986 318h3v7h-3z M992 322h3v3h-3z M998 324h3v1h-3z M1004 322h3v3h-3z M1010 321h3v4h-3z M1016 319h3v6h-3z M1022 324h3v1h-3z M1028 322h3v3h-3z M1046 323h3v2h-3z M1052 324h3v1h-3z M1058 324h3v1h-3z M1064 319h3v6h-3z M1070 318h3v7h-3z M1076 324h3v1h-3z M1082 324h3v1h-3z M1088 321h3v4h-3z M1094 322h3v3h-3z M1100 323h3v2h-3z M1112 324h3v1h-3z M1118 324h3v1h-3z M1124 323h3v2h-3z M1130 324h3v1h-3z" fill="#009100"/>
<rect x="0" y="369" width="1139" height="1" fill="#808080"/>
<rect x="0" y="472" width="1139" height="1" fill="#0000ff"/>
<rect x="0" y="514" width="1139" height="1" fill="#ff0000"/>
<g clip-path="url(#cp2)"><clipPath id="cp2"><rect x="0" y="340" width="1138" height="200"/></clipPath>
<path d="M3.5 369.5V367.689 M9.5 369.5V367.447 M15.5 369.5V366.904 M21.5 369.5V366.37 M27.5 369.5V366.787 M33.5 369.5V372.096 M39.5 369.5V376.509 M45.5 369.5V380.106 M51.5 369.5V382.81 M57.5 369.5V386.018 M63.5 369.5V389.21 M69.5 369.5V391.252 M75.5 369.5V391.743 M81.5 369.5V389.367 M87.5 369.5V385.23 M93.5 369.5V380.808 M99.5 369.5V377.76 M105.5 369.5V375.629 M111.5 369.5V374.514 M117.5 369.5V370.922 M123.5 369.5V368.671 M129.5 369.5V366.744 M135.5 369.5V365.93 M141.5 369.5V364.765 M147.5 369.5V363.743 M153.5 369.5V363.217 M159.5 369.5V363.201 M165.5 369.5V362.817 M171.5 369.5V362.048 M177.5 369.5V363.246 M183.5 369.5V363.488 M189.5 369.5V363.746 M195.5 369.5V364.044 M201.5 369.5V364.341 M207.5 369.5V364.313 M213.5 369.5V365.916 M219.5 369.5V367.128 M225.5 369.5V367.079 M231.5 369.5V367.297 M237.5 369.5V367.83 M255.5 369.5V370.626 M261.5 369.5V370.78 M267.5 369.5V370.78 M279.5 369.5V368.063 M291.5 369.5V368.33 M297.5 369.5V367.832 M303.5 369.5V365.398 M309.5 369.5V363.418 M315.5 369.5V363.148 M321.5 369.5V363.594 M327.5 369.5V364.099 M333.5 369.5V363.872 M339.5 369.5V363.673 M345.5 369.5V363.778 M351.5 369.5V363.233 M357.5 369.5V362.725 M363.5 369.5V362.938 M369.5 369.5V365.356 M375.5 369.5V366.835 M381.5 369.5V367.327 M387.5 369.5V366.811 M393.5 369.5V366.115 M405.5 369.5V367.996 M411.5 369.5V368.096 M417.5 369.5V368.754 M429.5 369.5V372.034 M435.5 369.5V375.75 M441.5 369.5V378.755 M447.5 369.5V378.406 M453.5 369.5V377.098 M459.5 369.5V376.705 M465.5 369.5V376.062 M471.5 369.5V374.261 M477.5 369.5V373.25 M483.5 369.5V371.351 M489.5 369.5V367.706 M495.5 369.5V364.541 M501.5 369.5V364.079 M507.5 369.5V363.649 M513.5 369.5V363.085 M519.5 369.5V363.201 M525.5 369.5V363.44 M531.5 369.5V363.335 M537.5 369.5V363.253 M543.5 369.5V363.375 M549.5 369.5V363.984 M555.5 369.5V365.226 M561.5 369.5V368.797 M567.5 369.5V371.778 M573.5 369.5V373.688 M579.5 369.5V374.592 M585.5 369.5V374.746 M591.5 369.5V375.22 M597.5 369.5V377.427 M603.5 369.5V379.28 M609.5 369.5V381.179 M615.5 369.5V382.246 M621.5 369.5V382.966 M627.5 369.5V383.119 M633.5 369.5V382.783 M639.5 369.5V381.501 M645.5 369.5V378.77 M651.5 369.5V377.027 M657.5 369.5V373.173 M663.5 369.5V370.881 M669.5 369.5V368.38 M675.5 369.5V366.784 M681.5 369.5V366.245 M687.5 369.5V365.789 M693.5 369.5V364.515 M699.5 369.5V362.817 M705.5 369.5V362.694 M711.5 369.5V362.57 M717.5 369.5V363.292 M723.5 369.5V363.79 M729.5 369.5V364.287 M735.5 369.5V364.687 M741.5 369.5V365.007 M747.5 369.5V365.336 M753.5 369.5V365.55 M759.5 369.5V365.764 M765.5 369.5V365.939 M771.5 369.5V366.128 M777.5 369.5V366.351 M783.5 369.5V366.149 M789.5 369.5V365.905 M795.5 369.5V365.638 M801.5 369.5V363.99 M807.5 369.5V363.25 M813.5 369.5V362.899 M819.5 369.5V362.431 M825.5 369.5V361.677 M831.5 369.5V360.928 M837.5 369.5V360.809 M843.5 369.5V362.461 M849.5 369.5V364.779 M855.5 369.5V368.128 M867.5 369.5V370.229 M873.5 369.5V370.326 M879.5 369.5V370.522 M885.5 369.5V371.139 M891.5 369.5V371.565 M897.5 369.5V370.931 M903.5 369.5V370.337 M909.5 369.5V370.22 M921.5 369.5V370.87 M927.5 369.5V371.688 M933.5 369.5V372.099 M939.5 369.5V372.358 M945.5 369.5V372.002 M951.5 369.5V371.314 M981.5 369.5V368.586 M987.5 369.5V367.76 M993.5 369.5V367.35 M999.5 369.5V366.852 M1005.5 369.5V367.445 M1011.5 369.5V368.044 M1017.5 369.5V367.595 M1023.5 369.5V367.378 M1029.5 369.5V367.248 M1035.5 369.5V366.922 M1041.5 369.5V367.262 M1047.5 369.5V367.779 M1053.5 369.5V368.099 M1065.5 369.5V371.544 M1071.5 369.5V372.556 M1077.5 369.5V372.655 M1083.5 369.5V372.211 M1089.5 369.5V373.137 M1095.5 369.5V373.96 M1101.5 369.5V373.17 M1107.5 369.5V372.468 M1113.5 369.5V372.309 M1119.5 369.5V372.468 M1125.5 369.5V371.621 M1131.5 369.5V370.824 M1137.5 369.5V371.17" stroke="#ff0000" stroke-width="1" fill="none"/>
<polyline points="0,371.82 10.43,369.73 20.86,367.23 27.12,367.23 31.3,371.82 41.73,383.3 52.16,394.77 62.59,407.29 73.02,419.81 79.28,422.94 86.58,424.4 91.8,421.89 100.15,420.43 111.62,420.02 116.84,416.68 125.18,413.55 135.61,410.42 146.05,405.83 154.39,402.7 162.74,400.4 171.08,396.86 177.34,396.44 187.77,393.73 198.21,391.64 208.64,389.55 216.98,391.22 229.5,389.55 237.85,389.55 242.02,391.22 250.37,391.64 256.62,392.68 271.23,393.1 279.57,390.6 285,391.64 297.52,390.6 310.04,383.71 318.38,381.21 326.73,380.17 343.42,375.99 355.94,370.78 362.2,369.32 372.63,371.82 383.06,371.19 393.49,369.32 399.75,371.82 406.01,369.73 414.36,369.11 422.7,370.78 431.05,375.99 439.39,384.34 445.65,387.05 456.08,388.51 464.43,390.18 481.12,390.18 485.29,387.47 493.64,380.17 504.07,375.99 514.5,371.82 524.93,369.32 535.37,366.6 547.88,363.48 556.23,363.48 562.49,367.02 570,371.82 578.35,375.99 590.86,380.17 599.21,386.43 611.73,396.86 624.25,405.2 636.76,411.04 651.37,411.04 661.8,407.29 674.32,402.07 688.92,398.94 699.36,393.31 711.87,389.14 724.39,387.05 736.91,384.96 747.34,383.3 761.95,381.63 778.64,379.54 795.33,375.99 807.85,370.36 820.37,365.56 832.88,360.35 839.14,358.26 847.49,358.68 855,361.39 867.52,364.52 880.04,365.56 890.47,367.23 902.99,366.6 917.59,367.02 928.02,369.32 938.46,371.19 948.89,372.45 963.49,370.36 976.01,371.19 984.36,368.27 1001.05,364.94 1013.56,365.56 1026.08,362.85 1036.51,360.76 1053.21,360.35 1063.64,364.1 1074.07,367.65 1084.5,368.27 1094.93,371.82 1109.54,372.45 1119.97,373.91 1130.4,372.86 1136.66,373.91 1137.5,373.91" fill="none" stroke="#ffff00" stroke-width="1" shape-rendering="crispEdges"/>
<polyline points="0,373.49 10.43,371.82 20.86,370.36 29.21,370.36 37.55,372.86 45.9,377.04 56.33,383.92 62.59,387.89 73.02,396.86 87.63,408.33 100.15,412.5 108.49,415.01 131.44,415.01 146.05,411.46 162.74,406.66 177.34,402.7 187.77,399.57 204.46,395.4 219.07,393.31 235.76,391.22 250.37,391.22 279.57,392.06 285,392.27 299.6,392.27 310.04,389.97 322.55,386.43 339.25,382.88 355.94,377.45 368.46,375.37 380.97,373.49 397.66,372.45 410.18,370.78 420.61,370.36 431.05,372.86 441.48,375.99 451.91,380.17 462.34,382.67 472.77,385.8 482.16,387.05 495.72,384.34 510.33,379.54 524.93,375.37 539.54,371.82 552.06,368.27 560.4,367.02 570,368.27 582.52,372.24 595.04,375.99 607.55,382.25 620.07,389.14 632.59,395.81 645.11,401.66 657.63,405.2 670.15,405.2 686.84,403.12 699.36,399.99 716.05,394.77 732.74,390.6 747.34,387.47 768.21,384.34 784.9,381.63 801.59,378.71 816.19,373.91 830.8,369.73 843.32,365.56 855,362.85 871.69,364.1 888.38,364.94 907.16,365.98 923.85,366.6 938.46,368.27 948.89,370.15 963.49,370.78 980.18,370.36 992.7,368.69 1005.22,367.23 1017.74,366.6 1032.34,363.89 1051.12,361.81 1061.55,362.01 1076.16,364.52 1088.67,366.19 1105.37,369.11 1117.88,370.78 1128.32,371.4 1136.66,372.24 1137.5,372.24" fill="none" stroke="#0000ff" stroke-width="1" shape-rendering="crispEdges"/>
<polyline points="0,489.43 3.13,488.38 9.39,480.04 18.78,474.19 26.08,474.19 32.34,478.99 38.6,487.34 44.86,498.81 51.12,508.2 57.38,513.42 63.63,518.22 70.94,520.72 78.24,523.85 83.46,523.85 89.71,521.35 100.15,516.55 106.41,515.09 112.66,515.09 121.01,511.33 129.36,507.16 141.87,502.99 150.22,493.6 159.61,484.21 165.87,484.21 171.5,485.88 177.34,494.64 183.6,498.4 189.86,507.16 196.12,509.66 208.64,511.33 214.9,515.5 223.24,520.09 229.5,519.26 237.85,519.26 250.37,518.63 256.62,515.92 262.88,513.84 273.32,513.42 279.57,510.91 285,509.25 295.43,506.12 303.78,499.86 310.04,489.43 316.3,481.08 322.55,477.53 330.9,474.4 339.25,472.11 346.55,468.56 356.98,467.52 364.28,470.65 370.54,475.86 376.8,484.21 383.06,490.47 389.32,493.6 395.58,495.68 401.84,499.86 410.18,502.99 416.44,501.32 422.7,505.07 428.96,514.46 435.22,521.35 440.44,522.39 447.74,519.68 454,513.42 461.3,506.74 468.6,505.07 483.21,504.45 490.51,497.77 495.72,489.43 501.98,481.08 510.33,475.86 518.67,472.73 527.02,470.65 539.54,470.65 547.88,468.98 556.23,469.19 562.49,475.86 567.7,486.3 570,494.64 573.13,504.03 579.39,512.38 590.86,515.5 603.38,518.63 617.99,521.76 638.85,522.39 651.37,519.68 657.63,517.17 668.06,510.29 678.49,506.12 688.92,499.86 697.27,487.34 705.61,473.78 711.87,466.48 717.09,465.01 724.39,468.56 734.82,475.86 747.34,484.21 753.6,488.8 759.44,496.73 771.34,502.57 777.59,496.73 783.23,489.43 789.07,485.88 795.33,477.53 801.59,473.36 807.85,465.43 816.19,460.22 824.54,458.55 837.06,458.55 843.32,460.22 849.57,469.6 855,477.95 861.26,490.47 867.52,497.77 873.78,500.9 880.04,498.4 885.67,501.32 891.51,504.03 897.77,507.16 903.4,506.12 915.5,505.07 921.76,502.36 927.61,501.32 934.28,504.45 945.34,504.45 951.39,499.86 957.23,496.73 963.49,490.05 975.38,490.47 981.23,492.14 987.48,485.25 993.33,480.04 999.38,474.82 1005.22,478.37 1011.48,481.08 1017.74,483.17 1023.58,480.04 1029.42,475.86 1035.47,470.65 1041.73,468.56 1047.57,467.52 1053.21,469.19 1059.46,473.78 1065.72,484.21 1071.57,495.68 1077.41,502.99 1083.46,506.12 1094.93,506.74 1101.19,505.07 1107.03,502.99 1113.08,503.4 1119.14,505.7 1125.19,506.12 1131.44,503.4 1136.66,501.32" fill="none" stroke="#ff0000" stroke-width="1" shape-rendering="crispEdges"/>
<polyline points="0,485.88 3.13,485.25 9.39,471.27 12.52,472.73 18.78,474.19 27.12,475.86 33.38,487.34 39.64,499.86 44.86,506.74 51.12,514.88 56.33,515.5 63.63,522.18 68.85,522.81 75.53,525.31 81.37,522.81 86.58,521.35 93.89,514.88 99.73,513.42 106.41,516.13 112.66,514.46 117.88,507.16 129.36,507.16 135.61,504.66 141.87,498.81 147.72,485.67 153.97,485.25 159.61,478.37 165.87,489.43 171.5,487.34 177.34,507.16 183.6,500.48 189.86,514.46 196.12,511.75 208.64,511.33 213.85,518.63 219.07,523.22 225.33,518.63 230.54,516.55 237.85,522.39 243.06,520.72 249.95,514.46 255.58,516.55 261.84,510.29 268.1,513.42 273.32,516.13 279.57,504.03 285,507.16 291.26,509.25 297.52,504.03 303.78,490.47 310.04,478.99 315.88,474.19 322.14,476.91 327.77,473.36 334.03,471.27 339.66,470.02 345.5,464.39 351.76,469.19 358.02,467.94 363.87,471.69 369.5,483.17 375.34,493.18 393.49,493.18 399.33,510.29 405.59,501.94 411.64,497.35 417.48,505.07 422.7,515.09 428.96,520.72 436.26,525.31 441.48,522.81 447.74,514.46 453.58,505.07 462.34,505.07 483.21,504.45 489.46,486.3 495.72,478.99 501.98,475.86 508.24,474.82 513.46,470.65 518.67,472.73 524.93,469.6 531.19,471.69 539.54,468.56 555.19,468.56 558.32,474.82 564.57,498.81 570,512.38 573.13,517.17 579.39,512.38 588.78,515.92 601.3,519.68 613.81,522.18 632.59,522.18 638.85,523.22 645.53,519.26 651.37,520.09 657.63,512.38 668.06,507.16 676.41,505.49 687.88,496.73 694.14,483.17 700.4,470.65 705.61,465.01 711.46,461.68 717.09,467.94 724.39,474.82 729.61,477.95 735.87,479.62 741.08,485.88 753.6,491.51 759.44,509.25 766.12,499.86 771.34,496.73 777.59,494.64 783.23,476.49 789.07,484.21 795.33,471.69 803.67,463.35 816.19,458.55 837.06,458.55 843.32,463.35 848.53,480.04 855,490.47 861.26,502.57 867.52,501.32 873.78,500.48 879.62,493.6 885.67,510.29 891.51,510.29 897.77,501.32 903.4,505.7 909.66,508.2 915.5,500.48 921.76,496.73 927.61,505.07 933.45,508.83 939.5,497.35 945.34,506.12 951.39,496.73 957.23,492.14 963.49,481.71 969.33,497.35 975.38,491.51 981.23,489.43 987.48,473.36 993.33,476.91 999.38,473.78 1005.22,483.17 1011.48,487.96 1017.74,478.37 1023.58,474.82 1029.42,472.73 1035.47,465.01 1041.73,468.56 1047.57,470.65 1053.21,471.27 1059.46,481.71 1065.72,495.68 1071.57,511.75 1077.41,502.57 1083.46,506.12 1089.09,510.29 1094.93,505.7 1101.19,502.57 1107.03,501.32 1113.08,506.74 1119.14,510.29 1125.19,502.57 1131.44,497.35 1136.66,503.4" fill="none" stroke="#0000ff" stroke-width="1" shape-rendering="crispEdges"/>
</g>
<rect x="1139" y="5" width="1" height="560" fill="#000"/>
<rect x="0" y="540" width="1203" height="1" fill="#000"/>
<rect x="0" y="325" width="1139" height="1" fill="#000"/>
<path d="M1139 23.5H1145 M1139 61.5H1145 M1139 100.5H1145 M1139 138.5H1145 M1139 177.5H1145 M1139 215.5H1145 M1139 258.5H1145 M1139 296.5H1145 M1139 358.5H1145 M1139 395.5H1145 M1139 458.5H1145 M1139 496.5H1145 M3.5 540V545 M57.5 540V545 M153.5 540V545 M249.5 540V545 M345.5 540V545 M441.5 540V545 M549.5 540V545 M645.5 540V545 M741.5 540V545 M837.5 540V545 M933.5 540V545 M1029.5 540V545 M1125.5 540V545" stroke="#000" stroke-width="1" fill="none"/>
<text transform="translate(1146.5,29) scale(0.84,1)" font-family="Liberation Sans, IPAGothic, sans-serif" font-size="12.5" text-anchor="middle" x="3.57 10.71 17.86 25.00 32.14" fill="#000">8,730</text>
<text transform="translate(1146.5,67) scale(0.84,1)" font-family="Liberation Sans, IPAGothic, sans-serif" font-size="12.5" text-anchor="middle" x="3.57 10.71 17.86 25.00 32.14" fill="#000">8,695</text>
<text transform="translate(1146.5,106) scale(0.84,1)" font-family="Liberation Sans, IPAGothic, sans-serif" font-size="12.5" text-anchor="middle" x="3.57 10.71 17.86 25.00 32.14" fill="#000">8,660</text>
<text transform="translate(1146.5,144) scale(0.84,1)" font-family="Liberation Sans, IPAGothic, sans-serif" font-size="12.5" text-anchor="middle" x="3.57 10.71 17.86 25.00 32.14" fill="#000">8,625</text>
<text transform="translate(1146.5,183) scale(0.84,1)" font-family="Liberation Sans, IPAGothic, sans-serif" font-size="12.5" text-anchor="middle" x="3.57 10.71 17.86 25.00 32.14" fill="#000">8,590</text>
<text transform="translate(1146.5,221) scale(0.84,1)" font-family="Liberation Sans, IPAGothic, sans-serif" font-size="12.5" text-anchor="middle" x="3.57 10.71 17.86 25.00 32.14" fill="#000">8,555</text>
<text transform="translate(1146.5,264) scale(0.84,1)" font-family="Liberation Sans, IPAGothic, sans-serif" font-size="12.5" text-anchor="middle" x="3.57 10.71 17.86 25.00 32.14 39.29" fill="#000">210.00</text>
<text transform="translate(1146.5,302) scale(0.84,1)" font-family="Liberation Sans, IPAGothic, sans-serif" font-size="12.5" text-anchor="middle" x="3.57 10.71 17.86 25.00 32.14" fill="#000">90.00</text>
<text transform="translate(1146.5,364) scale(0.84,1)" font-family="Liberation Sans, IPAGothic, sans-serif" font-size="12.5" text-anchor="middle" x="3.57 10.71 17.86 25.00" fill="#000">4.00</text>
<text transform="translate(1146.5,401) scale(0.84,1)" font-family="Liberation Sans, IPAGothic, sans-serif" font-size="12.5" text-anchor="middle" x="3.57 10.71 17.86 25.00 32.14" fill="#000">-9.00</text>
<text transform="translate(1146.5,464) scale(0.84,1)" font-family="Liberation Sans, IPAGothic, sans-serif" font-size="12.5" text-anchor="middle" x="3.57 10.71 17.86 25.00 32.14 39.29" fill="#000">100.00</text>
<text transform="translate(1146.5,502) scale(0.84,1)" font-family="Liberation Sans, IPAGothic, sans-serif" font-size="12.5" text-anchor="middle" x="3.57 10.71 17.86 25.00 32.14" fill="#000">45.00</text>
<text transform="translate(2,560) scale(0.84,1)" font-family="Liberation Sans, IPAGothic, sans-serif" font-size="12.5" text-anchor="middle" x="3.57 10.71 17.86 25.00 32.14" fill="#000">02:40</text>
<text transform="translate(56,560) scale(0.84,1)" font-family="Liberation Sans, IPAGothic, sans-serif" font-size="12.5" text-anchor="middle" x="3.57 10.71 17.86 25.00 32.14" fill="#000">09:20</text>
<text transform="translate(152,560) scale(0.84,1)" font-family="Liberation Sans, IPAGothic, sans-serif" font-size="12.5" text-anchor="middle" x="3.57 10.71 17.86 25.00 32.14" fill="#000">10:40</text>
<text transform="translate(248,560) scale(0.84,1)" font-family="Liberation Sans, IPAGothic, sans-serif" font-size="12.5" text-anchor="middle" x="3.57 10.71 17.86 25.00 32.14" fill="#000">12:00</text>
<text transform="translate(344,560) scale(0.84,1)" font-family="Liberation Sans, IPAGothic, sans-serif" font-size="12.5" text-anchor="middle" x="3.57 10.71 17.86 25.00 32.14" fill="#000">13:20</text>
<text transform="translate(440,560) scale(0.84,1)" font-family="Liberation Sans, IPAGothic, sans-serif" font-size="12.5" text-anchor="middle" x="3.57 10.71 17.86 25.00 32.14" fill="#000">14:40</text>
<text transform="translate(548,560) scale(0.84,1)" font-family="Liberation Sans, IPAGothic, sans-serif" font-size="12.5" text-anchor="middle" x="3.57 10.71 17.86 25.00 32.14" fill="#000">17:20</text>
<text transform="translate(644,560) scale(0.84,1)" font-family="Liberation Sans, IPAGothic, sans-serif" font-size="12.5" text-anchor="middle" x="3.57 10.71 17.86 25.00 32.14" fill="#000">18:40</text>
<text transform="translate(740,560) scale(0.84,1)" font-family="Liberation Sans, IPAGothic, sans-serif" font-size="12.5" text-anchor="middle" x="3.57 10.71 17.86 25.00 32.14" fill="#000">20:00</text>
<text transform="translate(836,560) scale(0.84,1)" font-family="Liberation Sans, IPAGothic, sans-serif" font-size="12.5" text-anchor="middle" x="3.57 10.71 17.86 25.00 32.14" fill="#000">21:20</text>
<text transform="translate(932,560) scale(0.84,1)" font-family="Liberation Sans, IPAGothic, sans-serif" font-size="12.5" text-anchor="middle" x="3.57 10.71 17.86 25.00 32.14" fill="#000">22:40</text>
<text transform="translate(1028,560) scale(0.84,1)" font-family="Liberation Sans, IPAGothic, sans-serif" font-size="12.5" text-anchor="middle" x="3.57 10.71 17.86 25.00 32.14" fill="#000">10/11</text>
<text transform="translate(1124,560) scale(0.84,1)" font-family="Liberation Sans, IPAGothic, sans-serif" font-size="12.5" text-anchor="middle" x="3.57 10.71 16.07">01:</text>
<rect x="1142.5" y="323.5" width="39" height="14" fill="#fff" stroke="#000" stroke-width="1"/>
<text x="1150" y="335.5" font-family="Liberation Sans, IPAGothic, sans-serif" font-size="17" text-anchor="middle">×</text>
<text transform="translate(1156,335) scale(0.84,1)" font-family="Liberation Sans, IPAGothic, sans-serif" font-size="12.5" text-anchor="middle" x="10.71 17.86 25.00" fill="#000">100</text>
<rect x="1187.5" y="7.5" width="14" height="12" fill="#fff" stroke="#9a9a9a" stroke-width="1"/>
<path d="M1189.5 11H1200.5L1195 17Z" fill="#7d7d7d" stroke="#2a2a2a" stroke-width="0.8" shape-rendering="auto"/>
<rect x="1187.5" y="242.5" width="14" height="12" fill="#fff" stroke="#9a9a9a" stroke-width="1"/>
<path d="M1189.5 246H1200.5L1195 252Z" fill="#7d7d7d" stroke="#2a2a2a" stroke-width="0.8" shape-rendering="auto"/>
<rect x="1187.5" y="342.5" width="14" height="12" fill="#fff" stroke="#9a9a9a" stroke-width="1"/>
<path d="M1189.5 346H1200.5L1195 352Z" fill="#7d7d7d" stroke="#2a2a2a" stroke-width="0.8" shape-rendering="auto"/>
<rect x="1187.5" y="442.5" width="14" height="12" fill="#fff" stroke="#9a9a9a" stroke-width="1"/>
<path d="M1189.5 446H1200.5L1195 452Z" fill="#7d7d7d" stroke="#2a2a2a" stroke-width="0.8" shape-rendering="auto"/>
<text x="0.30000000000000004" y="18" font-size="12" textLength="24" lengthAdjust="spacingAndGlyphs" fill="#000">日経</text><text transform="translate(25,18) scale(0.84,1)" font-family="Liberation Sans, IPAGothic, sans-serif" font-size="12.5" text-anchor="middle" x="3.57 10.71 17.86 25.00 32.14 39.29 46.43 53.57 60.71 67.86 75.00 82.14 89.29 96.43 103.57 110.71" fill="#000">225<tspan textLength="6.7" lengthAdjust="spacingAndGlyphs">m</tspan>ini 12/12( 5</text><text x="120.3" y="18" font-size="12" textLength="12" lengthAdjust="spacingAndGlyphs" fill="#000">分</text><text transform="translate(133,18) scale(0.84,1)" font-family="Liberation Sans, IPAGothic, sans-serif" font-size="12.5" text-anchor="middle" x="3.57 10.71 17.86 25.00 32.14 39.29 46.43 53.57 60.71 67.86 75.00 82.14 89.29 96.43 103.57 110.71 117.86 125.00 132.14 139.29 146.43 153.57 160.71 167.86 175.00 182.14 189.29" fill="#000">, 2012/10/06 - 2012/10/11 )</text>
<text x="313.8" y="18" font-size="12" textLength="48" lengthAdjust="spacingAndGlyphs" fill="#000">移動平均</text><text transform="translate(362.5,18) scale(0.84,1)" font-family="Liberation Sans, IPAGothic, sans-serif" font-size="12.5" text-anchor="middle" x="3.57 10.71 17.86 25.00 32.14 39.29 46.43 53.57 60.71 67.86 75.00 82.14 89.29" fill="#000">( <tspan textLength="6.7" lengthAdjust="spacingAndGlyphs">C</tspan>lose, 10 )</text>
<text x="459.8" y="18" font-size="12" textLength="48" lengthAdjust="spacingAndGlyphs" fill="#000">移動平均</text><text transform="translate(508.5,18) scale(0.84,1)" font-family="Liberation Sans, IPAGothic, sans-serif" font-size="12.5" text-anchor="middle" x="3.57 10.71 17.86 25.00 32.14 39.29 46.43 53.57 60.71 67.86 75.00 82.14 89.29" fill="#000">( <tspan textLength="6.7" lengthAdjust="spacingAndGlyphs">C</tspan>lose, 75 )</text>
<text x="605.8" y="18" font-size="12" textLength="48" lengthAdjust="spacingAndGlyphs" fill="#000">移動平均</text><text transform="translate(654.5,18) scale(0.84,1)" font-family="Liberation Sans, IPAGothic, sans-serif" font-size="12.5" text-anchor="middle" x="3.57 10.71 17.86 25.00 32.14 39.29 46.43 53.57 60.71 67.86 75.00 82.14 89.29" fill="#000">( <tspan textLength="6.7" lengthAdjust="spacingAndGlyphs">C</tspan>lose, 75 )</text>
<text x="751.8" y="18" font-size="12" textLength="48" lengthAdjust="spacingAndGlyphs" fill="#000">移動平均</text><text transform="translate(800.5,18) scale(0.84,1)" font-family="Liberation Sans, IPAGothic, sans-serif" font-size="12.5" text-anchor="middle" x="3.57 10.71 17.86 25.00 32.14 39.29 46.43 53.57 60.71 67.86 75.00 82.14" fill="#000">( <tspan textLength="6.7" lengthAdjust="spacingAndGlyphs">C</tspan>lose, 5 )</text>
<text x="891.8" y="18" font-size="12" textLength="60" lengthAdjust="spacingAndGlyphs" fill="#000">一目均衡表</text><text transform="translate(952.5,18) scale(0.84,1)" font-family="Liberation Sans, IPAGothic, sans-serif" font-size="12.5" text-anchor="middle" x="3.57 10.71 17.86 25.00 32.14 39.29 46.43 53.57 60.71 67.86 75.00 82.14 89.29" fill="#000">( 9, 26, 52 )</text>
<text x="0.30000000000000004" y="32" font-size="12" textLength="48" lengthAdjust="spacingAndGlyphs" fill="#000">移動平均</text><text transform="translate(49,32) scale(0.84,1)" font-family="Liberation Sans, IPAGothic, sans-serif" font-size="12.5" text-anchor="middle" x="3.57 10.71 17.86 25.00 32.14 39.29 46.43 53.57 60.71 67.86 75.00 82.14 89.29 96.43" fill="#000">( <tspan textLength="6.7" lengthAdjust="spacingAndGlyphs">C</tspan>lose, 150 )</text>
<text x="151.8" y="32" font-size="12" textLength="48" lengthAdjust="spacingAndGlyphs" fill="#000">移動平均</text><text transform="translate(200.5,32) scale(0.84,1)" font-family="Liberation Sans, IPAGothic, sans-serif" font-size="12.5" text-anchor="middle" x="3.57 10.71 17.86 25.00 32.14 39.29 46.43 53.57 60.71 67.86 75.00 82.14 89.29" fill="#000">( <tspan textLength="6.7" lengthAdjust="spacingAndGlyphs">C</tspan>lose, 20 )</text>
<text x="297.8" y="32" font-size="12" textLength="48" lengthAdjust="spacingAndGlyphs" fill="#000">移動平均</text><text transform="translate(346.5,32) scale(0.84,1)" font-family="Liberation Sans, IPAGothic, sans-serif" font-size="12.5" text-anchor="middle" x="3.57 10.71 17.86 25.00 32.14 39.29 46.43 53.57 60.71 67.86 75.00 82.14 89.29" fill="#000">( <tspan textLength="6.7" lengthAdjust="spacingAndGlyphs">C</tspan>lose, 25 )</text>
<text x="443.8" y="32" font-size="12" textLength="48" lengthAdjust="spacingAndGlyphs" fill="#000">移動平均</text><text transform="translate(492.5,32) scale(0.84,1)" font-family="Liberation Sans, IPAGothic, sans-serif" font-size="12.5" text-anchor="middle" x="3.57 10.71 17.86 25.00 32.14 39.29 46.43 53.57 60.71 67.86 75.00 82.14 89.29" fill="#000">( <tspan textLength="6.7" lengthAdjust="spacingAndGlyphs">C</tspan>lose, 40 )</text>
<text x="0.30000000000000004" y="254" font-size="12" textLength="36" lengthAdjust="spacingAndGlyphs" fill="#000">出来高</text>
<text transform="translate(1,353) scale(0.84,1)" font-family="Liberation Sans, IPAGothic, sans-serif" font-size="12.5" text-anchor="middle" x="3.57 10.71 17.86 25.00 32.14 39.29 46.43 53.57 60.71 67.86 75.00 82.14 89.29 96.43 103.57 110.71 117.86" fill="#000"><tspan textLength="6.7" lengthAdjust="spacingAndGlyphs">M</tspan><tspan textLength="6.7" lengthAdjust="spacingAndGlyphs">A</tspan><tspan textLength="6.7" lengthAdjust="spacingAndGlyphs">C</tspan><tspan textLength="6.7" lengthAdjust="spacingAndGlyphs">D</tspan>( 12, 26, 9 )</text>
<text x="0.30000000000000004" y="454" font-size="12" textLength="156" lengthAdjust="spacingAndGlyphs" fill="#000">スロー・ストキャスティクス</text><text transform="translate(157,454) scale(0.84,1)" font-family="Liberation Sans, IPAGothic, sans-serif" font-size="12.5" text-anchor="middle" x="3.57 10.71 17.86 25.00 32.14 39.29 46.43 53.57 60.71 67.86 75.00 82.14 89.29 96.43 103.57 110.71 117.86" fill="#000">( 14, 3, 80, 20 )</text>
</svg></body></html>
